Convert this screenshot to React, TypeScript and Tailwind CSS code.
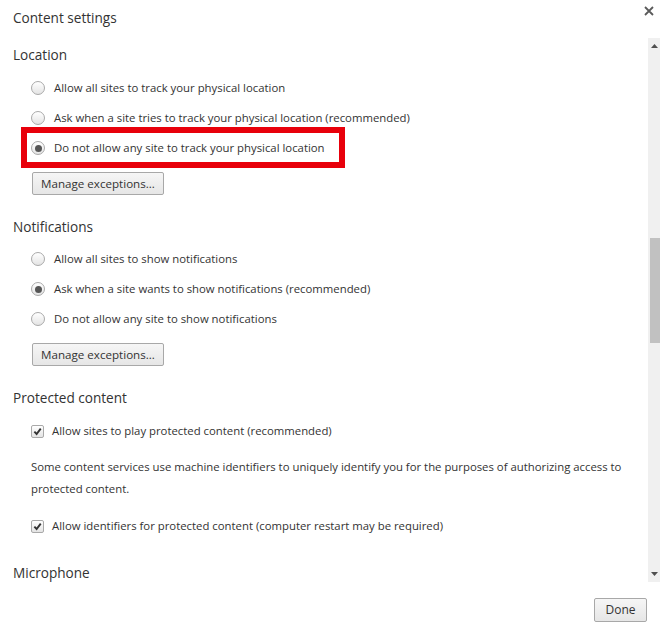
import { useState } from 'react'

function Radio({ checked }: { checked?: boolean }) {
  return (
    <span className="w-[14px] h-[14px] rounded-full border border-[#a9a9a9] bg-gradient-to-b from-[#ffffff] to-[#e4e4e4] flex items-center justify-center shrink-0">
      {checked && <span className="w-[7px] h-[7px] rounded-full bg-[#555]" />}
    </span>
  )
}

function Checkbox() {
  return (
    <span className="w-[13px] h-[13px] rounded-[2px] border border-[#a9a9a9] bg-gradient-to-b from-[#ffffff] to-[#e4e4e4] flex items-center justify-center shrink-0">
      <svg width="9" height="9" viewBox="0 0 10 10">
        <path d="M1.5 5.2 L4 7.8 L8.6 1.8" fill="none" stroke="#333" strokeWidth="2.1" />
      </svg>
    </span>
  )
}

function Button({ children, className = '' }: { children: React.ReactNode; className?: string }) {
  return (
    <button className={`h-[23px] border border-[#a8a8a8] rounded-[2px] bg-gradient-to-b from-[#f6f6f6] to-[#e6e6e6] text-[#333] text-[11.6px] flex items-center justify-center ${className}`}>
      {children}
    </button>
  )
}

function RadioRow({ label, checked }: { label: string; checked?: boolean }) {
  return (
    <div className="h-[30px] flex items-center pl-[31px] gap-[9px]">
      <Radio checked={checked} />
      <span>{label}</span>
    </div>
  )
}

function Header({ children, className = '' }: { children: React.ReactNode; className?: string }) {
  return <div className={`h-[20px] leading-[20px] text-[13.6px] pl-[13px] text-[#333] ${className}`}>{children}</div>
}

export default function App() {
  const [loc] = useState(2)
  const [notif] = useState(1)
  const locOptions = [
    'Allow all sites to track your physical location',
    'Ask when a site tries to track your physical location (recommended)',
    'Do not allow any site to track your physical location',
  ]
  const notifOptions = [
    'Allow all sites to show notifications',
    'Ask when a site wants to show notifications (recommended)',
    'Do not allow any site to show notifications',
  ]

  return (
    <div className="w-[660px] h-[630px] bg-white flex flex-col text-[#333] text-[11.35px] font-['Open_Sans',sans-serif] overflow-hidden">
      {/* Title */}
      <div className="h-[38px] flex justify-between">
        <div className="pl-[13px] pt-[8px] text-[13.6px] leading-[20px]">Content settings</div>
        <div className="pr-[6px] pt-[2px]">
          <svg width="10" height="10" viewBox="0 0 10 10" className="mt-[4px]">
            <path d="M1 1 L9 9 M9 1 L1 9" stroke="#5a5a5a" strokeWidth="1.8" />
          </svg>
        </div>
      </div>

      {/* Body */}
      <div className="h-[544px] flex">
        <div className="flex-1 overflow-hidden pt-[7px]">
          <Header>Location</Header>
          <div className="mt-[8px]">
            {locOptions.map((o, i) =>
              i === 2 ? (
                <div key={o} className="relative">
                  <RadioRow label={o} checked={loc === i} />
                  <div className="absolute left-[21px] w-[324px] top-[-6px] bottom-[-5px] border-[6px] border-[#e8000b]" />
                </div>
              ) : (
                <RadioRow key={o} label={o} checked={loc === i} />
              )
            )}
          </div>
          <Button className="ml-[32px] mt-[9px] w-[132px]">Manage exceptions...</Button>

          <Header className="mt-[22px]">Notifications</Header>
          <div className="mt-[7px]">
            {notifOptions.map((o, i) => (
              <RadioRow key={o} label={o} checked={notif === i} />
            ))}
          </div>
          <Button className="ml-[32px] mt-[9px] w-[132px]">Manage exceptions...</Button>

          <Header className="mt-[22px]">Protected content</Header>
          <div className="mt-[8px] h-[30px] flex items-center pl-[31px] gap-[8px]">
            <Checkbox />
            <span>Allow sites to play protected content (recommended)</span>
          </div>
          <p className="mt-[10px] ml-[31px] w-[600px] leading-[22px]">
            Some content services use machine identifiers to uniquely identify you for the purposes of authorizing access to protected content.
          </p>
          <div className="mt-[11px] h-[30px] flex items-center pl-[31px] gap-[8px]">
            <Checkbox />
            <span>Allow identifiers for protected content (computer restart may be required)</span>
          </div>

          <Header className="mt-[22px]">Microphone</Header>
        </div>

        {/* Scrollbar */}
        <div className="w-[12px] bg-[#f0f0f0] flex flex-col items-center">
          <div className="h-[16px] flex items-center justify-center">
            <svg width="7" height="4" viewBox="0 0 7 4">
              <path d="M0 4 L3.5 0 L7 4 Z" fill="#505050" />
            </svg>
          </div>
          <div className="h-[184px]" />
          <div className="w-[10px] ml-[2px] h-[105px] bg-[#c1c1c1]" />
          <div className="flex-1" />
          <div className="h-[16px] flex items-center justify-center">
            <svg width="7" height="4" viewBox="0 0 7 4">
              <path d="M0 0 L7 0 L3.5 4 Z" fill="#505050" />
            </svg>
          </div>
        </div>
      </div>

      {/* Footer */}
      <div className="flex-1 flex justify-end items-start pt-[16px] pr-[13px]">
        <Button className="w-[53px] h-[24px] text-[12px]">Done</Button>
      </div>
    </div>
  )
}
